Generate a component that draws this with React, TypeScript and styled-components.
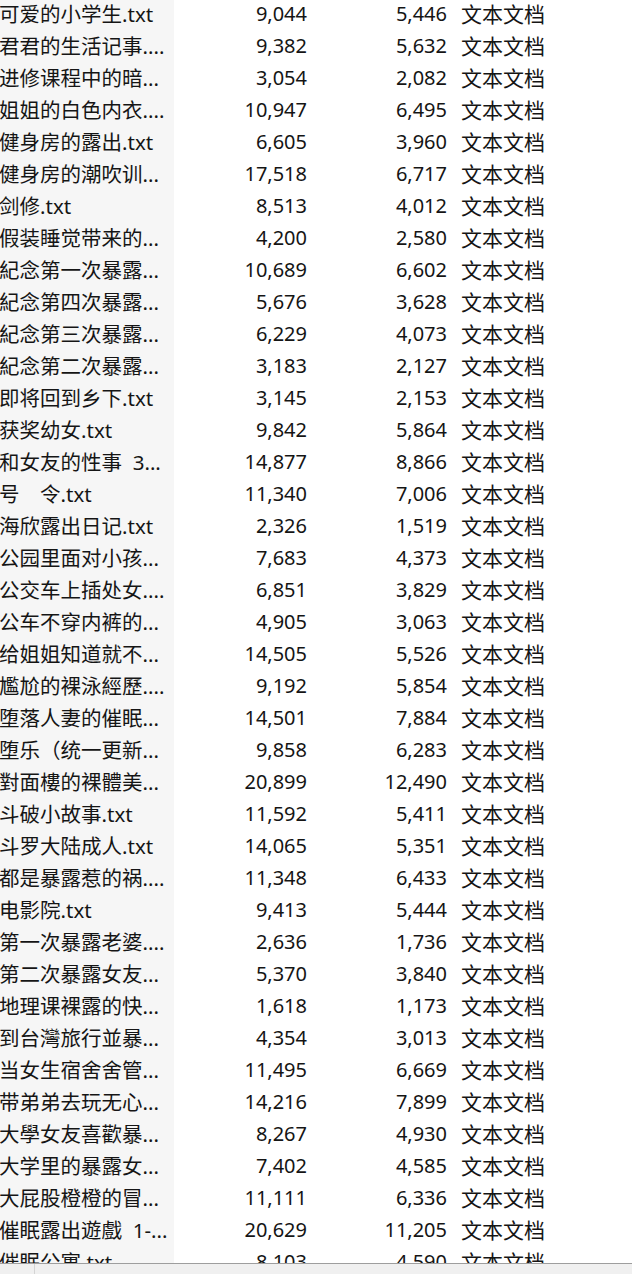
import React from "react";
import styled, { createGlobalStyle } from "styled-components";

const Global = createGlobalStyle`
  html, body { margin: 0; padding: 0; background: #ffffff; overflow: hidden; }
  #root { width: 632px; height: 1274px; }
`;

type Row = [string, string, string];

const rows: Row[] = [
  ["可爱的小学生.txt", "9,044", "5,446"],
  ["君君的生活记事....", "9,382", "5,632"],
  ["进修课程中的暗...", "3,054", "2,082"],
  ["姐姐的白色内衣....", "10,947", "6,495"],
  ["健身房的露出.txt", "6,605", "3,960"],
  ["健身房的潮吹训...", "17,518", "6,717"],
  ["剑修.txt", "8,513", "4,012"],
  ["假装睡觉带来的...", "4,200", "2,580"],
  ["紀念第一次暴露...", "10,689", "6,602"],
  ["紀念第四次暴露...", "5,676", "3,628"],
  ["紀念第三次暴露...", "6,229", "4,073"],
  ["紀念第二次暴露...", "3,183", "2,127"],
  ["即将回到乡下.txt", "3,145", "2,153"],
  ["获奖幼女.txt", "9,842", "5,864"],
  ["和女友的性事  3...", "14,877", "8,866"],
  ["号　令.txt", "11,340", "7,006"],
  ["海欣露出日记.txt", "2,326", "1,519"],
  ["公园里面对小孩...", "7,683", "4,373"],
  ["公交车上插处女....", "6,851", "3,829"],
  ["公车不穿内裤的...", "4,905", "3,063"],
  ["给姐姐知道就不...", "14,505", "5,526"],
  ["尷尬的裸泳經歷....", "9,192", "5,854"],
  ["堕落人妻的催眠...", "14,501", "7,884"],
  ["堕乐（统一更新...", "9,858", "6,283"],
  ["對面樓的裸體美...", "20,899", "12,490"],
  ["斗破小故事.txt", "11,592", "5,411"],
  ["斗罗大陆成人.txt", "14,065", "5,351"],
  ["都是暴露惹的祸....", "11,348", "6,433"],
  ["电影院.txt", "9,413", "5,444"],
  ["第一次暴露老婆....", "2,636", "1,736"],
  ["第二次暴露女友...", "5,370", "3,840"],
  ["地理课裸露的快...", "1,618", "1,173"],
  ["到台灣旅行並暴...", "4,354", "3,013"],
  ["当女生宿舍舍管...", "11,495", "6,669"],
  ["带弟弟去玩无心...", "14,216", "7,899"],
  ["大學女友喜歡暴...", "8,267", "4,930"],
  ["大学里的暴露女...", "7,402", "4,585"],
  ["大屁股橙橙的冒...", "11,111", "6,336"],
  ["催眠露出遊戲  1-...", "20,629", "11,205"],
  ["催眠公寓.txt", "8,103", "4,590"],
];

const Window = styled.div`
  width: 632px;
  height: 1274px;
  display: flex;
  flex-direction: column;
  font-family: "Noto Sans", "Noto Sans CJK SC", sans-serif;
  color: #151515;
`;

const ListArea = styled.div`
  flex: 1;
  overflow: hidden;
`;

const List = styled.div`
  margin-top: -2px;
  display: flex;
  flex-direction: column;
`;

const RowLine = styled.div`
  display: grid;
  grid-template-columns: 174px 133px 140px 1fr;
  height: 32px;
  line-height: 32px;
  font-size: 20.5px;
  white-space: nowrap;
`;

const NameCell = styled.div`
  background: #f6f6f6;
  overflow: hidden;
  margin-left: -1px;
  white-space: pre;
`;

const NumCell = styled.div`
  text-align: right;
  font-size: 20px;
`;

const TypeCell = styled.div`
  padding-left: 14px;
  font-size: 21px;
`;

const StatusBar = styled.div`
  height: 10px;
  flex-shrink: 0;
  border-top: 1px solid #9e9e9e;
  background: #f0f0f0;
  display: flex;
`;

const StatusSection = styled.div<{ $w?: number }>`
  width: ${(p) => (p.$w ? `${p.$w}px` : "auto")};
  border-right: 1px solid #d4d4d4;
`;

export default function App() {
  return (
    <>
      <Global />
      <Window>
        <ListArea>
          <List>
            {rows.map(([name, a, b], i) => (
              <RowLine key={i}>
                <NameCell>{name}</NameCell>
                <NumCell>{a}</NumCell>
                <NumCell>{b}</NumCell>
                <TypeCell>文本文档</TypeCell>
              </RowLine>
            ))}
          </List>
        </ListArea>
        <StatusBar>
          <StatusSection $w={34} />
        </StatusBar>
      </Window>
    </>
  );
}
